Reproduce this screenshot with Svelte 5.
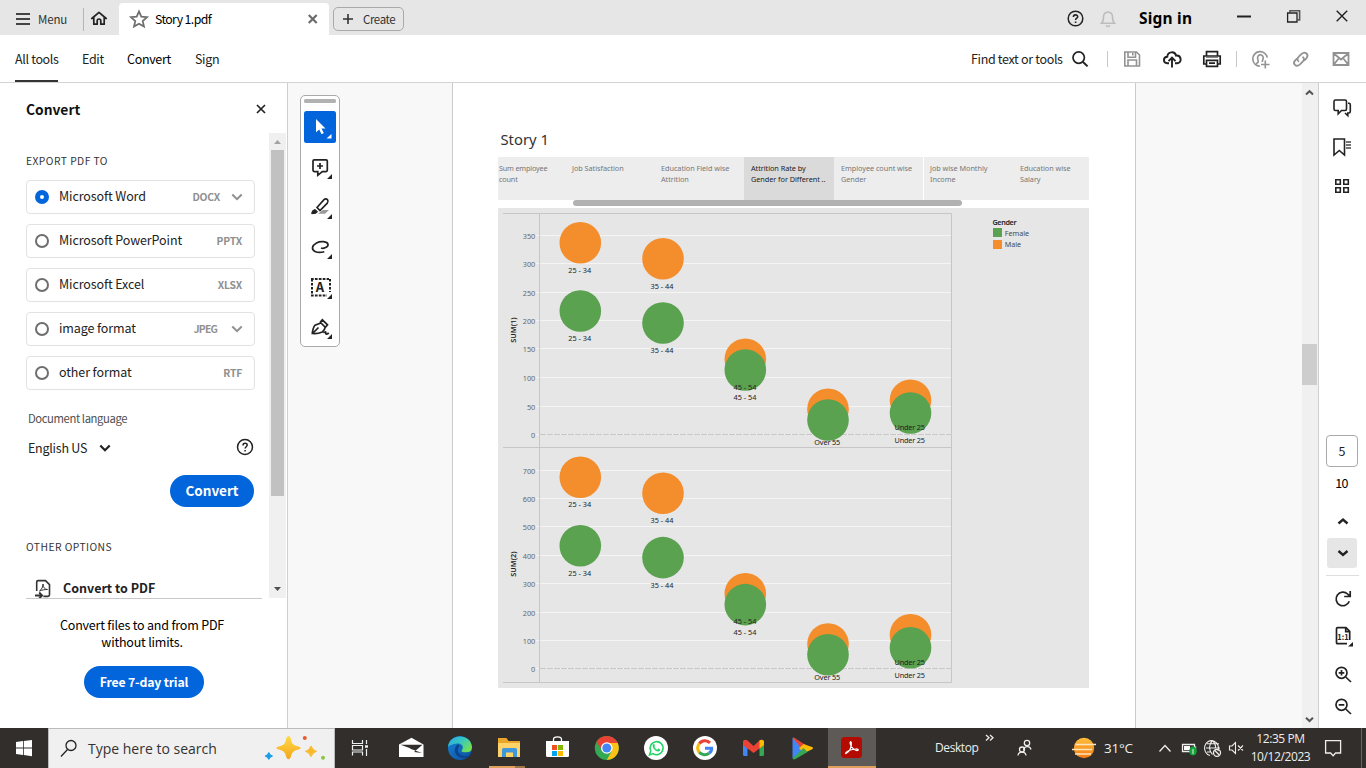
<script>
  const formats = [
    { name: 'Microsoft Word', tag: 'DOCX', menu: true, on: true },
    { name: 'Microsoft PowerPoint', tag: 'PPTX' },
    { name: 'Microsoft Excel', tag: 'XLSX' },
    { name: 'image format', tag: 'JPEG', menu: true },
    { name: 'other format', tag: 'RTF' }
  ];
  const points = [
    ['Sum employee', 'count'],
    ['Job Satisfaction', ''],
    ['Education Field wise', 'Attrition'],
    ['Attrition Rate by', 'Gender for Different ..'],
    ['Employee count wise', 'Gender'],
    ['Job wise Monthly', 'Income'],
    ['Education wise', 'Salary']
  ];
  const O = '#f48e2c';
  const G = '#5aa150';
  const panes = [
    {
      label: 'SUM(1)', ly: 330,
      ticks: [[350, 235.5], [300, 263.5], [250, 292.5], [200, 320.5], [150, 348.5], [100, 377.5], [50, 406.5], [0, 434.5]],
      dots: [
        [580.3, 242.8, O], [663, 258.8, O], [580.3, 311, G], [663, 323, G], [745.3, 359.3, O], [745.3, 370, G],
        [828, 409.2, O], [828, 420, G], [910.5, 400.2, O], [910.5, 413, G]
      ],
      names: [
        [579.7, 270.5, '25 - 34'], [662, 286.5, '35 - 44'], [579.7, 338.5, '25 - 34'], [662, 350.5, '35 - 44'],
        [745, 387.2, '45 - 54'], [745, 397.5, '45 - 54'], [827.3, 442.5, 'Over 55'], [909.8, 427.5, 'Under 25'], [909.8, 440.5, 'Under 25']
      ]
    },
    {
      label: 'SUM(2)', ly: 564,
      ticks: [[700, 470.5], [600, 498.5], [500, 526.5], [400, 555.5], [300, 583.5], [200, 612.5], [100, 640.5], [0, 668.5]],
      dots: [
        [580.3, 477.3, O], [663, 493.3, O], [580.3, 545.7, G], [663, 557.6, G], [745.3, 593.8, O], [745.3, 604.6, G],
        [828, 644, O], [828, 654.7, G], [910.5, 634.8, O], [910.5, 647.7, G]
      ],
      names: [
        [579.7, 504.7, '25 - 34'], [662, 520.7, '35 - 44'], [579.7, 573.5, '25 - 34'], [662, 585.5, '35 - 44'],
        [745, 621.7, '45 - 54'], [745, 632.5, '45 - 54'], [827.3, 677.5, 'Over 55'], [909.8, 662.7, 'Under 25'], [909.8, 675.7, 'Under 25']
      ]
    }
  ];
</script>

<div class="app">
  <header class="titlebar">
    <span></span>
    <svg width="22" height="35" viewBox="16 0 22 35" class="ln"><path d="M16 14h14M16 19h14M16 24h14" /></svg>
    <span class="menu">Menu</span>
    <svg width="36" height="35" viewBox="83 0 36 35">
      <path d="M83.5 8v23" stroke="#b5b5b5" fill="none" />
      <path d="M91.8 18.5l7.2-6.2 7.2 6.2M93.8 17.5v6.7h3.4v-3.4a1.8 1.8 0 013.6 0v3.4h3.4v-6.7" fill="none" stroke="#222" stroke-width="1.7" stroke-linejoin="round" stroke-linecap="round" />
    </svg>
    <div class="tab">
      <svg width="36" height="32" viewBox="119 3 36 32"><path d="M139 11.3l2.3 5.3 5.8.6-4.4 3.8 1.3 5.6-5-2.9-5 2.9 1.3-5.6-4.4-3.8 5.8-.6z" fill="none" stroke="#6e6e6e" stroke-width="1.7" /></svg>
      <span class="fname">Story 1.pdf</span>
      <svg width="21" height="32" viewBox="308 3 21 32"><path d="M308.7 15l8 8m0-8l-8 8" stroke="#6a6a6a" stroke-width="2.200" /></svg>
    </div>
    <button class="create"><svg width="12" height="12" viewBox="0 0 12 12"><path d="M6 1v10M1 6h10" stroke="#333" stroke-width="1.6" /></svg><span>Create</span></button>
    <span></span>
    <svg width="72" height="35" viewBox="1067 0 72 35" fill="none">
      <circle cx="1075.5" cy="18.5" r="7.3" stroke="#222" stroke-width="1.5" />
      <path d="M1073.4 17c0-2.8 4.3-2.8 4.3-.3 0 1.5-2.1 1.6-2.1 3.3M1075.6 21.5v1.5" stroke="#222" stroke-width="1.6" />
      <path d="M1101.5 23.3h13c-1.8-1.7-2-3-2-6.3 0-3-1.3-4.7-4.5-5-3.2.3-4.5 2-4.5 5 0 3.3-.2 4.6-2 6.3zM1106 25.5q2 2 4 0" stroke="#bdbdbd" stroke-width="1.6" />
    </svg>
    <span class="signin">Sign in</span>
    <svg width="129" height="35" viewBox="1237 0 129 35" fill="none" stroke="#222">
      <path d="M1237 16.5h14" stroke-width="2" />
      <path d="M1290 12.5v-1.8h9.6v9.2h-2" stroke-width="1.6" stroke="#555" /><path d="M1287.6 13h9.4v9h-9.4z" stroke-width="1.3" />
      <path d="M1336.700 10.800l10.500 10.500m0-10.500l-10.500 10.500" stroke-width="1.4" />
    </svg>
  </header>

  <nav class="toolbar">
    <span class="t on">All tools</span><span class="t edit">Edit</span><span class="t blk">Convert</span><span class="t">Sign</span>
    <span class="find">Find text or tools</span>
    <svg width="304" height="47" viewBox="1062 35 304 47" fill="none" stroke="#222" stroke-width="1.7">
      <circle cx="1078.7" cy="57.6" r="5.7" /><path d="M1083 62l4.6 4.4" stroke-width="2" />
      <path d="M1107.5 51v16M1236.5 51v16" stroke="#c8c8c8" stroke-width="1" />
      <g stroke="#929292" stroke-width="1.6"><path d="M1124.8 52h11.7l3 3v11h-14.7zM1128 52v5.3h7.5V52M1132.8 53v2.5M1128 66v-6h8.5v6" />
        <path d="M1260 66.200a7.300 7.300 0 117.300-8.500M1256 63.500c3.200-.6 2.200-2.500 1.700-4.500-1.200-4.800 5.300-5.800 5.500-1.200.1 2-1.200 2.600-.9 4.200M1261 64.500h8.500M1265.300 60.500v8" />
        <path d="M1299 61.700c-2.300-1.500-1.700-3.600-.2-5l2.800-2.800c3.600-3.200 7.800.7 4.800 4.400l-2.300 2.400M1302.500 56.700c2.200 1.500 1.700 3.400.2 4.900l-3 3c-3.500 3-7.700-.8-4.500-4.300l2-2" stroke-width="1.800" />
        <path d="M1333.500 53h15v12h-15zM1333.500 53.300l7.500 6.200 7.500-6.200M1333.500 65l5.500-7M1348.500 65l-5.500-7" stroke-width="1.800" /></g>
      <path d="M1169 63.2h-1.700c-4.500-.2-4.500-6.300 0-6.500.3-5.300 7.700-5.900 8.700-1.100 5.500-.7 6.400 7.200 1.400 7.600H1175M1172 67.500v-9.300M1168.500 61.200l3.500-3.500 3.500 3.500" stroke-width="1.900" />
      <path d="M1206.500 56v-4.300h11V56M1206 64h-2.200v-8h16.4v8h-2M1206.500 60.300h11v6h-11zM1209 63.200h6" stroke-width="1.700" /><path d="M1206 57.500h12" stroke-width="1" stroke="#888" />
    </svg>
  </nav>

  <main>
    <aside class="panel">
      <div class="head"><b>Convert</b><svg width="10" height="10" viewBox="0 0 10 10"><path d="M1 1l8 8m0-8L1 9" stroke="#222" stroke-width="1.7" /></svg></div>
      <div class="scroller">
        <div class="list">
          <div class="sec">EXPORT PDF TO</div>
          {#each formats as f}
            <div class="fmt">
              <i class="radio" class:on={f.on}></i><span class="nm">{f.name}</span><span class="tag {f.tag}">{f.tag}</span>
              {#if f.menu}<svg width="12" height="8" viewBox="0 0 12 8"><path d="M1.3 1.5L6 6.2l4.7-4.700" fill="none" stroke="#909090" stroke-width="2" /></svg>{/if}
            </div>
          {/each}
          <div class="doclang">Document language</div>
          <div class="lang"><span>English US</span><svg width="12" height="8" viewBox="0 0 12 8"><path d="M1.3 1.5L6 6.2l4.7-4.700" fill="none" stroke="#222" stroke-width="2.2" /></svg>
            <svg class="q" width="18" height="18" viewBox="0 0 18 18" fill="none" stroke="#222" stroke-width="1.5"><circle cx="9" cy="9" r="7.5" /><path d="M7 7.4c0-2.8 4.2-2.8 4.2-.3 0 1.6-2.1 1.7-2.1 3.5M9.1 12v1.6" /></svg>
          </div>
          <button class="pill conv">Convert</button>
          <div class="sec other">OTHER OPTIONS</div>
          <div class="topdf"><svg width="18" height="19" viewBox="34 579 18 19" fill="none" stroke="#333" stroke-width="1.6"><path d="M36.7 591v-9q0-1.400 1.400-1.400h7.400l4 4v10.200q0 1.600-1.600 1.600h-4.500" /><path d="M35 595.500h6.500M39.200 592.500l3 3-3 3" stroke-width="1.800" /><path d="M39.500 591c2-1 3.500-4.500 3.500-7 0 3.500 2 5.500 4.500 5.500-3 0-5.500.5-8 1.500z" stroke-width="1" /></svg><span>Convert to PDF</span></div>
        </div>
        <svg width="18" height="465" viewBox="269 133 18 465"><path fill="#f0f0f0" d="M269 133h17v465h-17z" /><path fill="#c1c1c1" d="M271 150h13v346h-13z" /><path fill="#a3a3a3" d="M274 144h7l-3.500-4z" /><path fill="#505050" d="M274 587h7l-3.500 4z" /></svg>
      </div>
      <div class="promo"><p>Convert files to and from PDF<br />without limits.</p><button class="pill trial">Free 7-day trial</button></div>
    </aside>

    <section class="viewer">
      <div class="tools">
        <svg width="38" height="250" viewBox="301 96 38 250" fill="none" stroke="#222" stroke-width="1.7">
          <rect x="304" y="99" width="32" height="4" rx="1.5" fill="#b1b1b1" stroke="none" />
          <rect x="304" y="111" width="32" height="32" rx="2.500" fill="#0265dc" stroke="none" />
          <path d="M316 119v13.300l3.200-2.700 2.400 4.600 2.200-1.100-2.300-4.500h4z" fill="#fff" stroke="none" />
          <path d="M331.500 134v4.500h-5z" fill="#fff" stroke="none" />
          <path d="M332 174v5h-5zM332 214v5h-5zM332 254v5h-5zM332 294v5h-5zM332 334v5h-5z" fill="#222" stroke="none" />
          <path d="M314.300 159.800h11.700q1.300 0 1.300 1.300v9.200q0 1.300-1.300 1.300h-3.700l-4.500 3.700v-3.700h-3.500q-1.300 0-1.300-1.300v-9.200q0-1.300 1.300-1.300zM320 163v6M317 166h6" />
          <path d="M317 207.500l7-7.800q1.800-1.500 3.500 0 1.300 1.700-.2 3.400l-7.300 7.400z" /><path d="M311.700 213.700q0-3.700 3.300-4.200l2.500 2.200q-1 2.300-5.800 2z" fill="#222" stroke-width="1" /><path d="M318 213.800l5-3.800h6l-4 3.800z" fill="#999" stroke="none" />
          <path d="M321 248c2.500 1 7.500-1 7-3.700-.6-3-7.500-3.500-11.500-1.300-4.500 2.500-5.500 6.500-1.500 8.400 2.600 1.200 6.200 1.100 9.300.3" />
          <path d="M311 279h18M311 295.500h16" stroke-width="2" stroke-dasharray="2.700 1.200" /><path d="M312 279v17M330 279v13" stroke-width="2" stroke-dasharray="2.500 1.500" />
          <text x="320" y="292" text-anchor="middle" fill="#222" stroke="none" font-size="13" font-weight="700">A</text>
          <path d="M312.300 333.500c.3-3 .9-6.200 2.700-8.300l6-2.200 4.200 4.200c-.3 1.900-1.200 3.700-2.900 4.700-2.900 1.400-6.500 2-10 1.600zM320 322.500l2.300-2.700 5.200 5-2.300 2.700M312.500 333.500l6-6M323.500 333q2.500-2.500 2.300 0t3 0" />
        </svg>
      </div>
      <article class="page">
        <h1>Story 1</h1>
        <div class="points">{#each points as p, i}<div class:sel={i === 3} class:rule={i === 5}>{p[0]}<br />{p[1]}</div>{/each}</div>
        <div class="hbar"></div>
        <svg class="chart" width="591" height="480" viewBox="498 208 591 480">
          <path d="M498 208h591v480H498z" fill="#e6e6e6" />
          {#each panes as p}
            {#each p.ticks as t}
              <path d="M536 {t[1]}h415" stroke="#f5f5f5" />
              {#if t[0] === 0}<path d="M540 {t[1]}h411" stroke="#c8c8c8" stroke-dasharray="6 1" />{/if}
              <text class="tick" x="535.300" y={t[1] + 3.200} text-anchor="end">{t[0]}</text>
            {/each}
            {#each p.dots as d}<circle cx={d[0]} cy={d[1]} r="20.800" fill={d[2]} />{/each}
            {#each p.names as n}<text x={n[0]} y={n[1] + 2.500} text-anchor="middle" textLength={n[2].length === 8 ? 30.5 : n[2][0] === 'O' ? 26 : 23}>{n[2]}</text>{/each}
            <text class="axis" transform="translate(516 {p.ly}) rotate(-90)" text-anchor="middle" textLength="25.500">{p.label}</text>
          {/each}
          <path d="M503 213.500h448.500v469H503M503 447.500h448.500M539.500 213.500v469" fill="none" stroke="#c6c6c6" />
          <text class="lg b" x="992.500" y="225" textLength="24">Gender</text>
          <path d="M993 228h9v9h-9z" fill={G} /><path d="M993 240h9v9h-9z" fill={O} />
          <text class="lg" x="1004.700" y="236">Female</text><text class="lg" x="1004.700" y="247">Male</text>
        </svg>
      </article>
      <svg class="vbar" width="16" height="645" viewBox="1302 83 16 645"><path fill="#f0f0f0" d="M1302 83h16v645h-16z" /><path fill="#cdcdcd" d="M1302 344h15v41h-15z" /><path d="M1306 94.500l3.500-3.300 3.500 3.300M1306 717.800l3.500 3.300 3.500-3.300" fill="none" stroke="#555" stroke-width="2" /></svg>
    </section>

    <aside class="rail">
      <svg width="47" height="352" viewBox="1319 83 47 352" fill="none" stroke="#222" stroke-width="1.600">
        <path d="M1335.500 100h9.500q1.500 0 1.500 1.500v7.500q0 1.500-1.500 1.500h-3.500l-3.300 3.300v-3.300h-2.700q-1.500 0-1.500-1.500v-7.500q0-1.500 1.500-1.500zM1348 103.300h1q1.300 0 1.300 1.500v6.700q0 1.500-1.500 1.500h-1v2.700l-2.800-2.700" />
        <path d="M1334 139h10.500v16l-5.200-4.500-5.300 4.500z" /><path d="M1346 142h5M1346 145h5M1346 148h5" stroke="#444" />
        <path d="M1335.800 179.800h4.500v4.500h-4.500zM1343.800 179.800h4.500v4.500h-4.500zM1335.800 187.800h4.500v4.500h-4.500zM1343.800 187.800h4.500v4.500h-4.500z" />
      </svg>
      <div class="cur">5</div>
      <div class="total">10</div>
      <svg width="47" height="228" viewBox="1319 500 47 228" fill="none" stroke="#222" stroke-width="1.700">
        <path d="M1338.500 523.500l4.500-4 4.500 4" stroke-width="2.400" />
        <rect x="1327" y="538" width="30" height="30" rx="3" fill="#e6e6e6" stroke="none" /><path d="M1338.500 551l4.500 4 4.500-4" stroke-width="2.400" />
        <path d="M1326 575.500h33" stroke="#dedede" stroke-width="1" />
        <path d="M1349.300 601.300a6.800 6.800 0 11-1.700-7.300l1.600 1.700M1350.200 591v5.500h-6" />
        <path d="M1349.700 640v-8.700l-3.700-3.600h-8.500q-1 0-1 1v14q0 1 1 1h9.500M1345.700 628v3.700h3.700" />
        <text x="1343" y="640" text-anchor="middle" font-size="7.500" font-weight="700" fill="#222" stroke="none">1:1</text><path d="M1353 642v4.500h-5z" fill="#222" stroke="none" />
        <circle cx="1341.500" cy="672.800" r="5.500" /><path d="M1345.700 677l5.300 5M1338.700 672.800h5.600M1341.500 670v5.600" />
        <circle cx="1341.500" cy="704.800" r="5.500" /><path d="M1345.700 709l5.300 5M1338.700 704.800h5.600" />
      </svg>
    </aside>
  </main>

  <footer class="taskbar">
    <svg width="48" height="40" viewBox="0 728 48 40" fill="#fff"><path d="M16 742l7-.9v6.500h-7zM23.800 741l8.200-1.100v7.700h-8.200zM16 748.400h7v6.600l-7-1zM23.800 748.400h8.200v7.800l-8.200-1.100z" /></svg>
    <div class="search">
      <svg width="39" height="38" viewBox="49 729 39 38" fill="none" stroke="#222" stroke-width="1.300"><circle cx="71" cy="745.500" r="5" /><path d="M67.500 749.500l-6.500 7" /></svg>
      <span>Type here to search</span>
      <svg width="74" height="38" viewBox="260 729 74 38">
        <defs><linearGradient id="gold" x2="0" y2="1"><stop stop-color="#ffd94a" /><stop offset="1" stop-color="#f3a71b" /></linearGradient></defs>
        <path d="M288.500 736q2 0 2.700 4.500 1 4.500 5.500 5.500 4 .8 4 2t-4 2q-4.500 1-5.500 5.500-.8 3.700-2.700 3.700t-2.700-3.700q-1-4.500-5.500-5.500-4-.8-4-2t4-2q4.500-1 5.500-5.500.7-4.500 2.700-4.500z" fill="url(#gold)" />
        <path d="M311 746q1.700 4.600 5.500 5.300-3.800.8-5.500 5.400-1.700-4.600-5.500-5.400 3.800-.7 5.500-5.300z" fill="#f8b92c" stroke="#f8b92c" />
        <path d="M268.800 752.500q1 2.800 3.700 3.600-2.700.7-3.700 3.300-1-2.600-3.700-3.300 2.700-.8 3.700-3.600z" fill="#189de8" stroke="#189de8" />
        <circle cx="304.800" cy="738" r="2" fill="#e85b2c" /><circle cx="323" cy="757.700" r="2" fill="#88c83f" />
      </svg>
    </div>
    <svg width="541" height="40" viewBox="335 728 541 40">
      <defs>
        <linearGradient id="edge" x2="1" y2=".6"><stop stop-color="#2aa9df" /><stop offset=".5" stop-color="#35c5c4" /><stop offset="1" stop-color="#6fdf5a" /></linearGradient>
        <linearGradient id="deep" x2="1" y2="1"><stop stop-color="#1683d8" /><stop offset="1" stop-color="#0d4d9d" /></linearGradient>
      </defs>
      <g fill="none" stroke="#eee" stroke-width="1.200"><path d="M352.500 740v3.500h10V740M352.500 755.500V752h10v3.500M352.500 745.500h10v4.500h-10zM366.500 740v4M366.500 749v7" /><path d="M365 746.500h3" stroke-width="2.500" /></g>
      <path d="M399 744.500l12.500-6.700 12 6.700V757H399z" fill="#fff" /><path d="M400.500 744.800h22l-8.500 7.300 8 1-11-4-1.500-1z" fill="#312e2b" />
      <circle cx="460" cy="748" r="12" fill="url(#deep)" /><path d="M448 747c1-14 23-14 24 0 0 5-4 6-9.500 5-1.500-.5-1-1.500 0-3 1.500-3-1.500-6-5.500-5.500-4 .5-8.500 2-9 3.500z" fill="url(#edge)" /><path d="M458 744c-6 5-3 14 6 14 3 0 5-1 7-3-5 2-12 1-13-4-.5-3 1.500-4 1.500-5z" fill="#0c458b" />
      <path d="M498 738h8.500l2 3H520v16h-22z" fill="#e9a62a" /><path d="M498 743h22v14h-22z" fill="#ffd368" /><path d="M502 757v-7.500q0-1.500 1.500-1.500h12q1.500 0 1.500 1.500v7.500h-4v-4.500h-7v4.500z" fill="#3e98db" />
      <path d="M546 741h23v14.500q0 1.500-1.500 1.500h-20q-1.500 0-1.500-1.500z" fill="#fff" /><path d="M553.500 742v-2.500c0-3.500 8-3.500 8 0v2.500" fill="none" stroke="#fff" stroke-width="1.300" /><path d="M552 745h5v5h-5z" fill="#f25022" /><path d="M558 745h5v5h-5z" fill="#7fba00" /><path d="M552 751h5v5h-5z" fill="#00a4ef" /><path d="M558 751h5v5h-5z" fill="#ffb900" />
      <circle cx="606.800" cy="748" r="12" fill="#34a853" /><path d="M596.400 742a12 12 0 0120.800 0l1 2h-11.400L602 750z" fill="#ea4335" /><path d="M606.800 760a12 12 0 0010.900-17h-10.900l4.800 8.200z" fill="#fbc116" /><circle cx="606.800" cy="748" r="5.800" fill="#fff" /><circle cx="606.800" cy="748" r="4.500" fill="#4285f4" />
      <circle cx="656" cy="748" r="12" fill="#fff" /><path d="M649.500 755l1.200-4a6.500 6.500 0 112.300 2.600z" fill="none" stroke="#25d366" stroke-width="1.600" /><path d="M653 744.500c.8-1 1.500-.5 1.800.8.400 1-1 1 .3 2.600 1.600 2 2.300 1.800 2.900 1 .8-.8 1.200.2 2 .7.900.8-.7 2-2 1.900-3-.3-6.500-4.500-5-7z" fill="#25d366" />
      <circle cx="705" cy="748" r="12" fill="#fff" /><g fill="none" stroke-width="3"><path d="M699.300 743.700a7 7 0 0110.700-.8" stroke="#ea4335" /><path d="M699.300 743.700a7 7 0 000 8.600" stroke="#fbbc05" /><path d="M699.300 752.300a7 7 0 009.700 1" stroke="#34a853" /><path d="M709 753.300q3-2.300 2.700-5h-6.700" stroke="#4285f4" /></g>
      <path d="M743 743h4.500v13H744.500q-1.500 0-1.500-1.500z" fill="#4285f4" /><path d="M759.500 743h4.500v11.500q0 1.500-1.500 1.500h-3z" fill="#34a853" /><path d="M743 745v-3c0-2.500 2.800-3 4.500-1.500l6 5.500 6-5.500c2-1.500 4.500-.5 4.500 1.500v3l-10.500 8z" fill="#ea4335" /><path d="M759.500 740.500c2-1.500 4.500-.5 4.500 1.500v3l-4.500 3.500z" fill="#fbbc04" />
      <path d="M792.500 738q.8-1 2 0l9.500 10-9.500 10.500q-2 .5-2-1z" fill="#4285f4" /><path d="M792.700 738q.8-1 2 0l13.300 8.500-4.500 4z" fill="#ea4335" /><path d="M803.500 744l8.500 3q2 1 0 2.300l-8 4-5-5z" fill="#fbbc04" /><path d="M792.500 758.500l11-10.500 4 4-12 7q-2 1-3-.5z" fill="#34a853" />
      <path d="M828 728h48v40h-48z" fill="#5d5a58" /><rect x="841" y="737" width="21" height="21" rx="3.500" fill="#b30b00" />
      <path d="M846 753.500c3.500-1.500 6-7 5.300-11-.5-1.800-1.700-.5-1 1.500.8 3 4.500 7 7.200 6.500 1.700-.5.500-1.800-2-1.500-4 .2-8.500 2-9.500 3.500-.5.800-.3 1.200 0 1z" fill="none" stroke="#fff" stroke-width="1.200" />
      <path d="M828 766h48v2h-48zM489 766h26v2h-26z" fill="#dda15c" /><path d="M515 766h10v2h-10z" fill="#a07646" />
    </svg>
    <span></span>
    <span class="desk">Desktop</span>
    <svg width="122" height="40" viewBox="982 728 122 40" fill="none" stroke="#eee" stroke-width="1.300">
      <path d="M986 735l3 2.700-3 2.700M990 735l3 2.700-3 2.700" />
      <circle cx="1027" cy="743" r="2.700" /><path d="M1023.500 750.500c.5-5 6.500-5 7.500-1" /><circle cx="1022" cy="749.500" r="2.500" /><path d="M1018 755.500c.5-4.500 7.500-4.500 8 0" />
      <defs><linearGradient id="sun" x2="0" y2="1"><stop stop-color="#ffbe3b" /><stop offset="1" stop-color="#f47b16" /></linearGradient></defs>
      <circle cx="1084" cy="748" r="10.200" fill="url(#sun)" stroke="none" /><path d="M1075.500 744.500h20.500M1072 749.500h20M1075 754h16" stroke="#fbe6bd" stroke-width="1.600" />
    </svg>
    <span class="temp">31°C</span>
    <svg width="92" height="40" viewBox="1158 728 92 40" fill="none" stroke="#eee" stroke-width="1.300">
      <path d="M1159.500 751.500l5.500-6 5.500 6" /><path d="M1182.500 744.500h12v7h-12zM1195.500 746.500v3" /><path d="M1184 746h6v4h-6z" fill="#fff" stroke="none" /><ellipse cx="1193" cy="751" rx="3.800" ry="4.500" fill="#12a33a" stroke="none" /><path d="M1193 749v5" stroke-width="1" />
      <path d="M1210 755.500a7 7.500 0 118-4.500M1206 748h14M1207 743.800h12M1207 752h4M1212.500 740.500c-4 4-4 10 0 14M1212.500 740.500c2.500 2.500 3.300 5 3 8" stroke-width="1.100" /><circle cx="1217" cy="752.800" r="3.500" /><path d="M1214.800 750.500l4.500 4.500" />
      <path d="M1229.500 746v4h2.500l3.500 3.500v-11L1232 746zM1238 745.500l5 5m0-5l-5 5" stroke-width="1.100" />
    </svg>
    <div class="clock">12:35 PM<br />10/12/2023</div>
    <svg width="48" height="40" viewBox="1318 728 48 40" fill="none" stroke="#eee" stroke-width="1.300"><path d="M1325.600 740.600h15v12.400h-5l-2.500 2.800-2.500-2.800h-5z" /><path d="M1361.500 728v40" stroke="#666" stroke-width="1" /></svg>
  </footer>
</div>

<style>
  :global(body) { margin: 0; overflow: hidden; }
  * { box-sizing: border-box; }
  svg { display: block; flex: none; }
  button { font: inherit; letter-spacing: inherit; padding: 0; cursor: pointer; }
  .app { width: 1366px; height: 768px; display: flex; flex-direction: column; background: #fff; color: #222; font: 12.500px/20px "Noto Sans CJK SC", "Noto Sans", sans-serif; white-space: nowrap; overflow: hidden; }
  .titlebar { height: 35px; background: #e6e6e6; display: grid; grid-template-columns: 16px 22px 45px 36px 214px 71px 1fr 72px 98px 129px; line-height: 37px; }
  .ln { fill: none; stroke: #444; stroke-width: 2; }
  .menu { font-size: 11.500px; letter-spacing: -.15px; color: #333; line-height: 38px; }
  .tab { width: 210px; height: 32px; margin-top: 3px; background: #fff; border-radius: 4px 4px 0 0; display: flex; line-height: 32px; color: #000; }
  .fname { width: 153px; font-size: 12.300px; letter-spacing: -.6px; }
  .create { height: 24px; margin-top: 7px; border: 1px solid #aaa; border-radius: 5px; background: none; display: flex; align-items: center; gap: 9px; padding-left: 8px; font-size: 11.500px; letter-spacing: -.4px; line-height: 22px; color: #333; }
  .signin { font-family: "Noto Sans", sans-serif; font-weight: 700; font-size: 15.500px; letter-spacing: .2px; color: #000; line-height: 36px; }
  .toolbar { height: 48px; border-bottom: 1px solid #d3d3d3; display: flex; padding-left: 15px; line-height: 48px; letter-spacing: -.33px; }
  .t { margin-right: 24px; height: 47px; }
  .on.t { width: 43px; border-bottom: 2px solid #333; }
  .t.edit { width: 21px; }
  .t.blk { color: #000; width: 44px; }
  .find { margin-left: auto; width: 91px; }
  main { height: 645px; display: flex; }
  .panel { width: 288px; border-right: 1px solid #cfcfcf; }
  .head { height: 50px; padding: 0 21px 0 26px; display: flex; align-items: center; justify-content: space-between; }
  .head svg { margin-top: 2px; }
  .head b { font-size: 13.800px; line-height: 24px; font-weight: 700; color: #111; margin-top: 2px; }
  .scroller { height: 465px; display: flex; overflow: hidden; }
  .list { width: 262px; margin-right: 7px; padding-left: 26px; padding-top: 18px; height: 466px; flex: none; }
  .sec { font-size: 10.300px; letter-spacing: .45px; color: #333; height: 19px; }
  .fmt { width: 229px; height: 34px; margin-top: 10px; border: 1px solid #e2e2e2; border-radius: 4px; display: flex; align-items: center; padding: 0 11px 0 8px; letter-spacing: -.1px; }
  .radio { width: 14px; height: 14px; border: 2px solid #6e6e6e; border-radius: 50%; margin-right: 10px; }
  .radio.on { border: 5px solid #0265dc; }
  .fmt .nm { margin-top: -2px; flex: 1; }
  .tag { color: #909090; font-size: 10.300px; letter-spacing: -.2px; font-weight: 700; margin-right: 1px; }
  .DOCX { margin-right: 11px; }
  .JPEG { margin-right: 14px; letter-spacing: -.8px; }
  .doclang { font-size: 11.300px; letter-spacing: -.42px; color: #505050; margin: 18px 0 0 2px; }
  .lang { display: flex; align-items: center; margin: 9px 0 0 2px; height: 22px; letter-spacing: -.25px; }
  .lang span { width: 71px; }
  .q { margin-left: 125px; margin-top: -3px; }
  .pill { display: block; border: 0; background: #0265dc; color: #fff; font-weight: 700; height: 32px; border-radius: 16px; line-height: 30px; }
  .conv { width: 84px; margin: 16px 0 0 144px; font-size: 13.500px; line-height: 28px; padding-bottom: 2px; }
  .other { margin-top: 30px; }
  .topdf { display: flex; gap: 11px; margin: 23px 0 0 8px; font-weight: 700; }
  .topdf span { margin-top: -1px; }
  .fmt + .fmt { margin-top: 10px; }
  .promo { border-top: 1px solid #c8c8c8; margin: 0 25px 0 26px; text-align: center; color: #000; }
  .promo p { margin: 17px 4px 16px 0; line-height: 17px; letter-spacing: -.2px; }
  .trial { width: 120px; margin-left: 58px; font-size: 12.300px; letter-spacing: -.2px; }
  .viewer { width: 1031px; background: #f8f8f8; border-right: 1px solid #cfcfcf; display: flex; }
  .tools { width: 40px; height: 252px; margin: 12px 112px 0 12px; border: 1px solid #aaa; border-radius: 5px; background: #fff; }
  .page { width: 684px; height: 645px; border: solid #cbcbcb; border-width: 0 1px; background: #fff; padding: 46px 0 0 45px; font-family: "Noto Sans", sans-serif; }
  h1 { font-weight: 400; font-size: 14.800px; line-height: 20px; margin: 0 0 8px 2.500px; color: #333; }
  .points { width: 591px; height: 43px; background: #ededed; display: grid; grid-template-columns: 67px 89px 90px 90px 89px 90px 76px; font-size: 7.300px; letter-spacing: -.05px; line-height: 11px; color: #777; }
  .points div { padding: 6px 0 0 7px; }
  .points div:first-child { padding-left: 1px; letter-spacing: -.2px; }
  .points .sel { background: #dadada; color: #222; }
  .points .rule { border-left: 1px solid #fff; padding-left: 6px; }
  .hbar { width: 389px; height: 6px; margin: 0 0 2px 75px; background: #b1b1b1; border-radius: 3px; }
  .chart text { font-size: 7.300px; fill: #222; }
  .chart .tick { fill: #686868; }
  .chart .axis { font-weight: 600; }
  .chart .lg { fill: #4a4a4a; font-size: 7.200px; }
  .chart .b { font-weight: 600; fill: #222; }
  .vbar { margin-left: auto; }
  .rail { width: 47px; }
  .cur { width: 32px; height: 32px; margin-left: 7px; border: 1px solid #aaa; border-radius: 4px; text-align: center; line-height: 29px; }
  .total { height: 33px; line-height: 32px; text-align: center; padding-right: 2px; color: #000; letter-spacing: -.6px; }
  .taskbar { height: 40px; background: #312e2b; color: #eee; display: grid; grid-template-columns: 48px 287px 541px 59px 47px 122px 54px 92px 68px 48px; font-family: "Open Sans", "Noto Sans", sans-serif; line-height: 40px; }
  .search { background: #f0f0f0; border: 1px solid #bbb; display: flex; color: #333; font-size: 14px; line-height: 39px; }
  .search span { flex: 1; }
  .desk { font-size: 12px; letter-spacing: -.4px; }
  .temp { font-size: 13.500px; letter-spacing: -.2px; }
  .clock { font-size: 12px; line-height: 18px; text-align: center; padding: 2px 7px 0 0; letter-spacing: -.4px; }
</style>
